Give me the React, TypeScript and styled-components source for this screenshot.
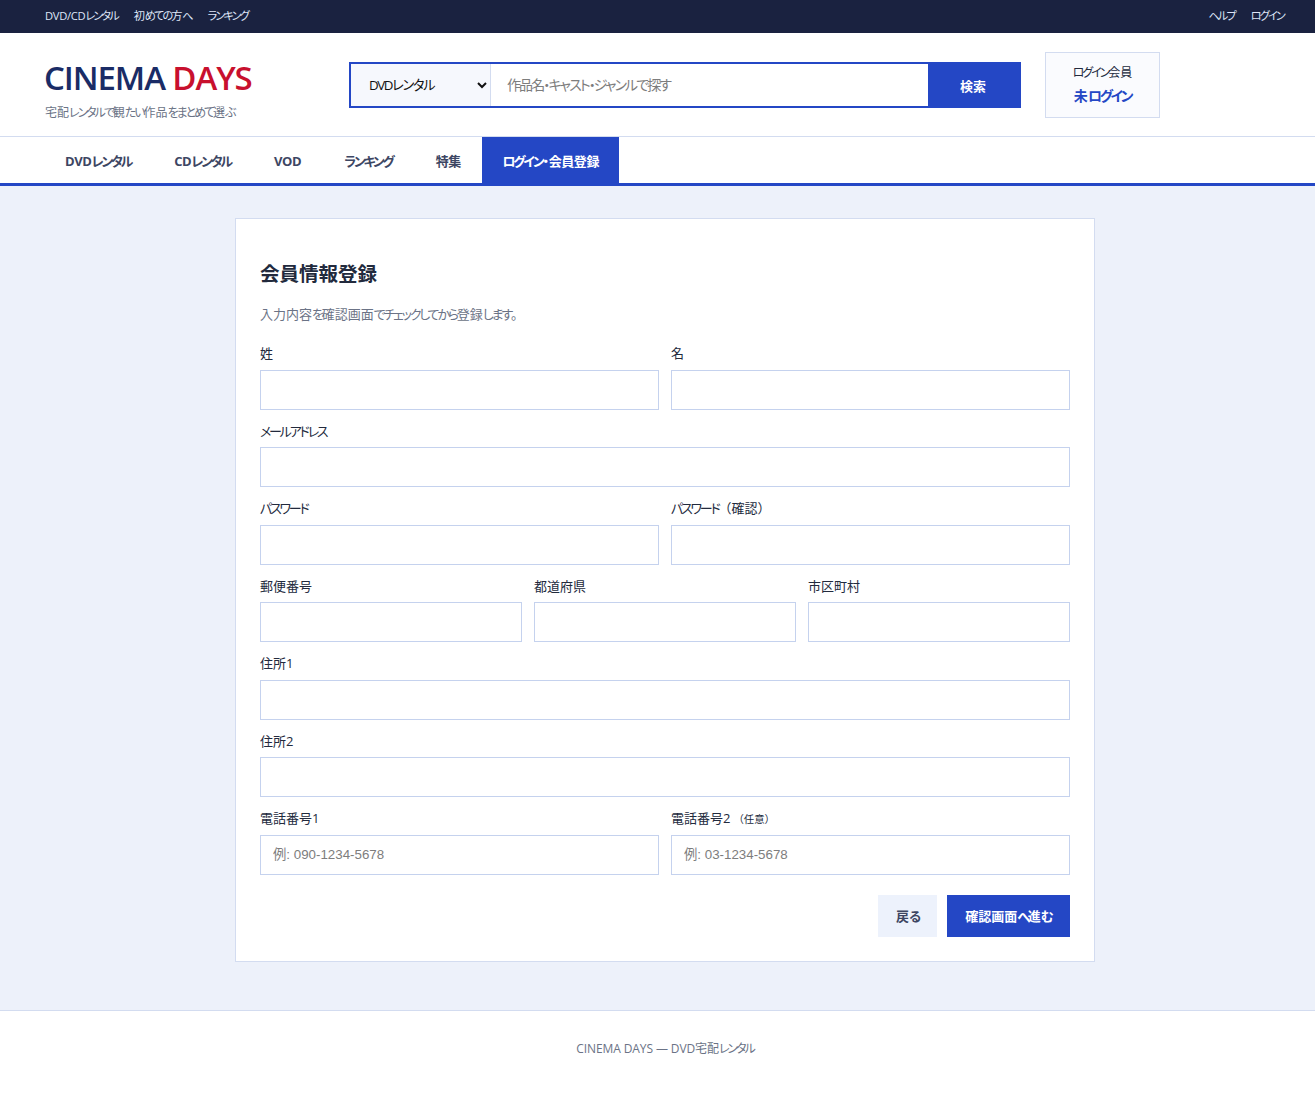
import React from "react";
import styled, { createGlobalStyle } from "styled-components";

const fontStack = `"Open Sans", "Noto Sans CJK JP", sans-serif`;

const GlobalStyle = createGlobalStyle`
  * { box-sizing: border-box; }
  body {
    margin: 0;
    background: #fff;
    color: #222a3d;
    font-family: ${fontStack};
    font-size: 14px;
    line-height: 1.5;
    font-feature-settings: "palt";
  }
`;

const Kana = styled.span`
  letter-spacing: -0.17em;
`;

const Bracket = styled.span`
  font-feature-settings: normal;
`;

const J: React.FC<{ children: string }> = ({ children }) => (
  <>
    {children.split(/([\u3041-\u30fa\u30fc-\u30ff]+|（[^）]*）)/).map((part, i) => {
      if (/^[\u3041-\u30fa\u30fc-\u30ff]/.test(part)) return <Kana key={i}>{part}</Kana>;
      if (part.startsWith("（")) return <Bracket key={i}>{part}</Bracket>;
      return part;
    })}
  </>
);

const TopBar = styled.div`
  height: 33px;
  padding: 0 31px 0 45px;
  background: #1a2240;
  display: flex;
  align-items: center;
  justify-content: space-between;
`;

const TopLinks = styled.div`
  display: flex;
  gap: 16px;
`;

const TopLink = styled.a`
  color: #dfe6f8;
  font-size: 11.2px;
  letter-spacing: -0.3px;
`;

const Header = styled.header`
  height: 104px;
  padding: 19px 0 0 45px;
  border-bottom: 1px solid #d3dcf0;
  display: flex;
  align-items: flex-start;
`;

const Brand = styled.div`
  width: 304px;
  padding-top: 4px;
`;

const Logo = styled.div`
  font-size: 33px;
  line-height: 44px;
  letter-spacing: -1.1px;
  margin-left: -1px;
  color: #1a2c66;
  font-weight: 600;

  span {
    color: #c8102e;
  }
`;

const Tagline = styled.div`
  margin-top: 4px;
  font-size: 12px;
  line-height: 18px;
  color: #6b7386;
`;

const SearchForm = styled.form`
  width: 672px;
  height: 46px;
  margin-top: 10px;
  border: 2px solid #2447c5;
  display: flex;
`;

const SearchSelect = styled.select`
  width: 140px;
  padding: 0 4px 0 14px;
  border: none;
  border-right: 1px solid #d3dcf0;
  border-radius: 0;
  background: #f6f8fd;
  color: #111;
  font-family: ${fontStack};
  font-size: 13.33px;
  letter-spacing: -1.4px;
  font-feature-settings: "palt";
`;

const SearchInput = styled.input`
  flex: 1;
  min-width: 0;
  padding: 0 16px 2px;
  border: none;
  font-family: ${fontStack};
  font-size: 14px;
  letter-spacing: -1.9px;
  font-feature-settings: "palt";

  &::placeholder {
    color: #7d7d7d;
  }
`;

const SearchButton = styled.button`
  flex: none;
  width: 93px;
  margin-right: -2px;
  padding: 0 3px 0 0;
  border: none;
  background: #2447c5;
  color: #fff;
  font-family: ${fontStack};
  font-size: 13px;
  font-weight: 700;
`;

const MemberBox = styled.div`
  width: 115px;
  height: 66px;
  margin-left: 24px;
  border: 1px solid #d3dcf0;
  background: #fafbfe;
  display: flex;
  flex-direction: column;
  align-items: center;
  justify-content: center;
`;

const MemberLabel = styled.div`
  font-size: 12px;
  line-height: 18px;
  color: #222a3d;
`;

const MemberState = styled.div`
  margin-top: 3px;
  font-size: 14px;
  line-height: 21px;
  font-weight: 700;
  color: #2447c5;
`;

const Nav = styled.nav`
  height: 49px;
  padding-left: 43.5px;
  border-bottom: 3px solid #2447c5;
  display: flex;
`;

const NavItem = styled.a<{ $active?: boolean }>`
  padding: 3px ${(p) => (p.$active ? "20px" : "21.5px")} 0 ${(p) => (p.$active ? "20px" : "21.5px")};
  display: flex;
  align-items: center;
  font-size: 13px;
  font-weight: 700;
  letter-spacing: -0.4px;
  color: ${(p) => (p.$active ? "#fff" : "#3d4663")};
  background: ${(p) => (p.$active ? "#2447c5" : "transparent")};
`;

const Main = styled.main`
  padding: 32px 30px 48px 45px;
  background: #edf1fa;
  border-bottom: 1px solid #d3dcf0;
`;

const Card = styled.section`
  width: 860px;
  margin: 0 auto;
  padding: 38px 24px 24px;
  border: 1px solid #d3dcf0;
  background: #fff;
`;

const Title = styled.h1`
  margin: 0 0 13px;
  font-size: 19.5px;
  line-height: 34px;
  font-weight: 700;
  color: #222a3d;
`;

const Lead = styled.p`
  margin: 0 0 20px;
  font-size: 13px;
  line-height: 20px;
  color: #6b7386;
`;

const Row = styled.div<{ $cols: number }>`
  display: grid;
  grid-template-columns: repeat(${(p) => p.$cols}, 1fr);
  gap: 12px;
  margin-bottom: 12px;
`;

const Field = styled.label`
  display: block;
`;

const LabelText = styled.span`
  display: block;
  margin-bottom: 6px;
  font-size: 13px;
  line-height: 19.5px;
  color: #222a3d;

  small {
    margin-left: 3px;
    font-size: 10.4px;
    line-height: 1;
  }
`;

const TextInput = styled.input`
  display: block;
  width: 100%;
  height: 40px;
  padding: 0 12px;
  border: 1px solid #c5d2ee;
  border-radius: 0;
  background: #fff;
  font-family: "Liberation Sans", "Noto Sans CJK JP", sans-serif;
  font-size: 13.33px;

  &::placeholder {
    color: #7d7d7d;
  }
`;

const Actions = styled.div`
  margin-top: 20px;
  display: flex;
  justify-content: flex-end;
  gap: 10px;
`;

const ActionButton = styled.button<{ $primary?: boolean }>`
  height: 42px;
  min-width: ${(p) => (p.$primary ? "123px" : "59px")};
  padding: 0 18px;
  border: none;
  font-family: ${fontStack};
  font-size: 13px;
  font-weight: 700;
  font-feature-settings: "palt";
  color: ${(p) => (p.$primary ? "#fff" : "#3d4663")};
  background: ${(p) => (p.$primary ? "#2447c5" : "#edf2fc")};
`;

const Footer = styled.footer`
  padding: 28px 30px 40px 45px;
  text-align: center;
  font-size: 12px;
  line-height: 20px;
  color: #6b7386;
  letter-spacing: -0.1px;
`;

type FieldDef = { label: string; note?: string; placeholder?: string };

const rows: FieldDef[][] = [
  [{ label: "姓" }, { label: "名" }],
  [{ label: "メールアドレス" }],
  [{ label: "パスワード" }, { label: "パスワード（確認）" }],
  [{ label: "郵便番号" }, { label: "都道府県" }, { label: "市区町村" }],
  [{ label: "住所1" }],
  [{ label: "住所2" }],
  [
    { label: "電話番号1", placeholder: "例: 090-1234-5678" },
    { label: "電話番号2", note: "（任意）", placeholder: "例: 03-1234-5678" },
  ],
];

const navItems = ["DVDレンタル", "CDレンタル", "VOD", "ランキング", "特集"];

export default function App() {
  return (
    <>
      <GlobalStyle />
      <TopBar>
        <TopLinks>
          <TopLink><J>DVD/CDレンタル</J></TopLink>
          <TopLink><J>初めての方へ</J></TopLink>
          <TopLink><J>ランキング</J></TopLink>
        </TopLinks>
        <TopLinks>
          <TopLink><J>ヘルプ</J></TopLink>
          <TopLink><J>ログイン</J></TopLink>
        </TopLinks>
      </TopBar>
      <Header>
        <Brand>
          <Logo>
            CINEMA <span>DAYS</span>
          </Logo>
          <Tagline><J>宅配レンタルで観たい作品をまとめて選ぶ</J></Tagline>
        </Brand>
        <SearchForm onSubmit={(e) => e.preventDefault()}>
          <SearchSelect defaultValue="dvd">
            <option value="dvd">DVDレンタル</option>
            <option value="cd">CDレンタル</option>
          </SearchSelect>
          <SearchInput placeholder="作品名・キャスト・ジャンルで探す" />
          <SearchButton type="submit">検索</SearchButton>
        </SearchForm>
        <MemberBox>
          <MemberLabel><J>ログイン会員</J></MemberLabel>
          <MemberState><J>未ログイン</J></MemberState>
        </MemberBox>
      </Header>
      <Nav>
        {navItems.map((item) => (
          <NavItem key={item}><J>{item}</J></NavItem>
        ))}
        <NavItem $active><J>ログイン・会員登録</J></NavItem>
      </Nav>
      <Main>
        <Card>
          <Title>会員情報登録</Title>
          <Lead><J>入力内容を確認画面でチェックしてから登録します。</J></Lead>
          {rows.map((row, i) => (
            <Row key={i} $cols={row.length}>
              {row.map((f) => (
                <Field key={f.label}>
                  <LabelText>
                    <J>{f.label}</J>
                    {f.note && <small><J>{f.note}</J></small>}
                  </LabelText>
                  <TextInput placeholder={f.placeholder} />
                </Field>
              ))}
            </Row>
          ))}
          <Actions>
            <ActionButton type="button"><J>戻る</J></ActionButton>
            <ActionButton type="button" $primary>
              <J>確認画面へ進む</J>
            </ActionButton>
          </Actions>
        </Card>
      </Main>
      <Footer><J>CINEMA DAYS — DVD宅配レンタル</J></Footer>
    </>
  );
}
